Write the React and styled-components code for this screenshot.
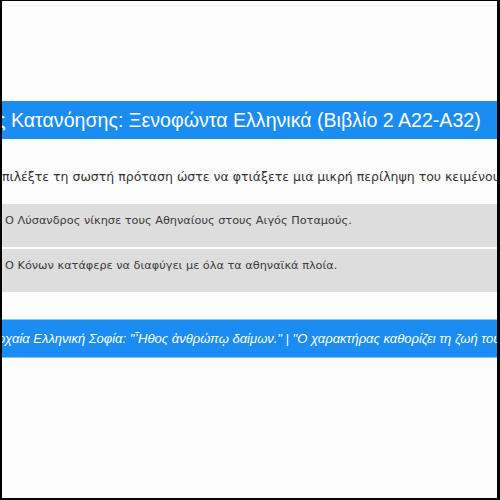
import React from "react";
import styled, { createGlobalStyle } from "styled-components";

const Global = createGlobalStyle`
  html, body { margin: 0; padding: 0; background: #fff; }
  * { box-sizing: border-box; }
`;

const Frame = styled.div`
  width: 500px;
  height: 500px;
  border: solid #000;
  border-width: 1px 3px 2px 2px;
  background: #fdfdfd;
  overflow: hidden;
  display: flex;
  flex-direction: column;
`;

const TopRule = styled.div`
  margin: 4px 0 0 4px;
  height: 1px;
  background: #f1f1f1;
`;

const TitleBar = styled.div`
  margin-top: 95px;
  height: 38px;
  background: #1b8df2;
  color: #fff;
  font-family: "Liberation Sans", Arial, sans-serif;
  font-size: 19.6px;
  line-height: 38px;
  white-space: nowrap;
  overflow: hidden;
  text-indent: ${(p) => p.$shift}px;
`;

const Prompt = styled.div`
  margin-top: 28px;
  color: #333;
  font-family: "DejaVu Sans", Verdana, sans-serif;
  font-size: 12.5px;
  line-height: 20px;
  white-space: nowrap;
  overflow: hidden;
  text-indent: ${(p) => p.$shift}px;
`;

const Options = styled.div`
  margin-top: 17px;
  display: flex;
  flex-direction: column;
  gap: 2px;
`;

const Option = styled.div`
  height: 43px;
  background: #dddddd;
  padding: 9px 0 0 3px;
  color: #3a3a3a;
  font-family: "DejaVu Sans", Verdana, sans-serif;
  font-size: 11.3px;
  line-height: 16px;
  white-space: nowrap;
`;

const QuoteBar = styled.div`
  margin-top: 27px;
  height: 39px;
  background: #1b8df2;
  border-top: 1px solid #8cc6f7;
  border-bottom: 1px solid #8cc6f7;
  color: #fff;
  font-family: "Liberation Sans", Arial, sans-serif;
  font-style: italic;
  font-size: 13px;
  line-height: 37px;
  white-space: nowrap;
  overflow: hidden;
  text-indent: ${(p) => p.$shift}px;
`;

const options = [
  "Ο Λύσανδρος νίκησε τους Αθηναίους στους Αιγός Ποταμούς.",
  "Ο Κόνων κατάφερε να διαφύγει με όλα τα αθηναϊκά πλοία.",
];

export default function App() {
  return (
    <>
      <Global />
      <Frame>
        <TopRule />
        <TitleBar $shift={-77}>
          Ασκήσεις Κατανόησης: Ξενοφώντα Ελληνικά (Βιβλίο 2 Α22-Α32)
        </TitleBar>
        <Prompt $shift={-8}>
          Επιλέξτε τη σωστή πρόταση ώστε να φτιάξετε μια μικρή περίληψη του κειμένου.
        </Prompt>
        <Options>
          {options.map((t) => (
            <Option key={t}>{t}</Option>
          ))}
        </Options>
        <QuoteBar $shift={-13}>
          Αρχαία Ελληνική Σοφία: "Ἦθος ἀνθρώπῳ δαίμων." | "Ο χαρακτήρας καθορίζει τη ζωή του ανθρώπου."
        </QuoteBar>
      </Frame>
    </>
  );
}
